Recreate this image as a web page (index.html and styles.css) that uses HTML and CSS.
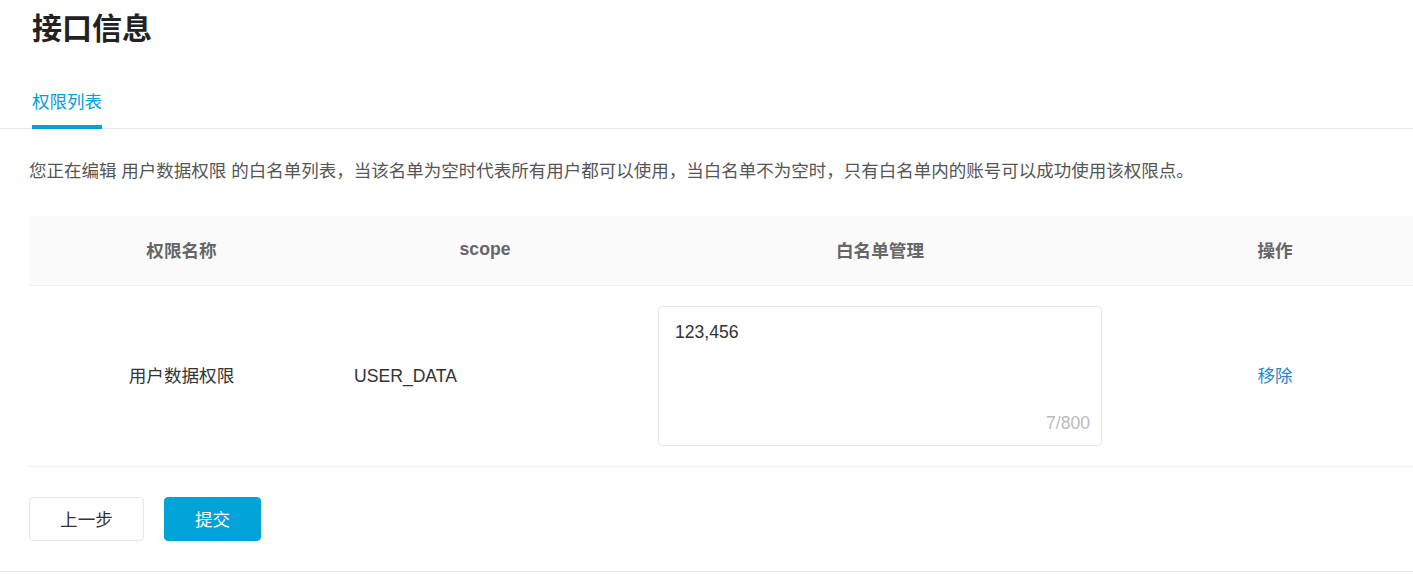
FILE: index.html
```html
<!DOCTYPE html>
<html lang="zh-CN">
<head>
    <meta charset="UTF-8">
    <title>接口信息</title>
    <link rel="stylesheet" href="styles.css">
</head>
<body>
<div class="page">

<h1 class="title">接口信息</h1>

<div class="tabs">
    <span class="tab active">权限列表</span>
</div>

<div class="content">
    <p class="desc">您正在编辑 用户数据权限 的白名单列表，当该名单为空时代表所有用户都可以使用，当白名单不为空时，只有白名单内的账号可以成功使用该权限点。</p>

    <table class="perm-table">
        <colgroup>
            <col class="c-name">
            <col class="c-scope">
            <col class="c-list">
            <col class="c-op">
        </colgroup>
        <thead>
            <tr>
                <th>权限名称</th>
                <th>scope</th>
                <th>白名单管理</th>
                <th>操作</th>
            </tr>
        </thead>
        <tbody>
            <tr>
                <td class="center">用户数据权限</td>
                <td class="latin">USER_DATA</td>
                <td>
                    <div class="textarea-box">
                        <textarea class="whitelist">123,456</textarea>
                        <span class="count">7/800</span>
                    </div>
                </td>
                <td class="center"><a class="link" href="#">移除</a></td>
            </tr>
        </tbody>
    </table>

    <div class="actions">
        <button class="btn">上一步</button>
        <button class="btn primary">提交</button>
    </div>
</div>

</div>
</body>
</html>
```

FILE: styles.css
```css
html, body { overflow: hidden; }
body {
    margin: 0;
    font-family: "Liberation Sans", "Noto Sans CJK SC", sans-serif;
    color: #333;
    background: #fff;
}
.page { border-bottom: 1px solid #e5e5e5; }

.title {
    margin: 0;
    padding: 8px 0 0 32px;
    font-size: 30px;
    line-height: 42px;
    font-weight: bold;
    color: #222;
}

.tabs {
    padding: 40px 0 0 32px;
    border-bottom: 1px solid #e8e8e8;
}
.tab {
    display: inline-block;
    font-size: 17.5px;
    line-height: 24px;
    padding-bottom: 11px;
    margin-bottom: -1px;
    border-bottom: 4px solid transparent;
}
.tab.active { color: #00a0d6; border-bottom-color: #00a0d6; }

.content { padding: 29px 0 30px 29px; overflow: hidden; }
.desc {
    margin: 0 0 32px;
    font-size: 17.5px;
    line-height: 26px;
    color: #555;
    white-space: nowrap;
}

.perm-table {
    width: 1397px;
    border-collapse: collapse;
    table-layout: fixed;
    font-size: 17.6px;
}
.c-name { width: 305px; }
.c-scope { width: 302px; }
.c-list { width: 488px; }
.c-op { width: 302px; }
.perm-table th {
    box-sizing: border-box;
    height: 69px;
    padding: 0 0 2px;
    background: #fafafa;
    border-bottom: 1px solid #f0f0f0;
    color: #666;
    font-weight: bold;
    text-align: center;
}
.perm-table td {
    padding: 20px 22px;
    border-bottom: 1px solid #f0f0f0;
    line-height: 26px;
}
.perm-table td.center { text-align: center; }
.perm-table td.latin { padding-left: 20px; }

.textarea-box { position: relative; }
.whitelist {
    display: block;
    box-sizing: border-box;
    width: 100%;
    height: 140px;
    margin: 0;
    padding: 12px 16px;
    border: 1px solid #e5e5e5;
    border-radius: 4px;
    font-family: inherit;
    font-size: 17.6px;
    line-height: 26px;
    color: #333;
    resize: none;
    outline: none;
}
.count {
    position: absolute;
    right: 12px;
    bottom: 10px;
    line-height: 26px;
    color: #bbb;
}
.link { color: #2b87c6; text-decoration: none; }

.actions { display: flex; gap: 20px; margin-top: 30px; }
.btn {
    box-sizing: border-box;
    width: 115px;
    height: 44px;
    border: 1px solid #e5e5e5;
    border-radius: 4px;
    background: #fff;
    font-family: inherit;
    font-size: 17.6px;
    color: #333;
}
.btn.primary {
    width: 97px;
    background: #00a3d8;
    border-color: #00a3d8;
    color: #fff;
}
```
